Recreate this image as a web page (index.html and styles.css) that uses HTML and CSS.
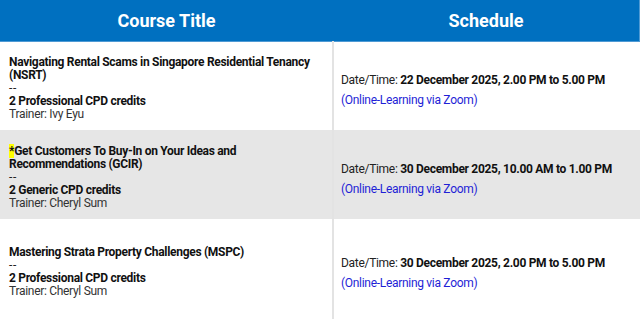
FILE: index.html
```html
<!DOCTYPE html>
<html>
<head>
<meta charset="utf-8">
<link rel="stylesheet" href="styles.css">
</head>
<body>
<table class="courses">
  <thead>
    <tr>
      <th class="col-title">Course Title</th>
      <th class="col-schedule">Schedule</th>
    </tr>
  </thead>
  <tbody>
    <tr class="row row-1">
      <td class="title-cell">
        <div class="course-name">Navigating Rental Scams in Singapore Residential Tenancy (NSRT)</div>
        <div class="sep">--</div>
        <div class="credits">2 Professional CPD credits</div>
        <div class="trainer">Trainer: Ivy Eyu</div>
      </td>
      <td class="schedule-cell">
        <p class="datetime">Date/Time: <b>22 December 2025, 2.00 PM to 5.00 PM</b></p>
        <p class="mode">(Online-Learning via Zoom)</p>
      </td>
    </tr>
    <tr class="row row-2 alt">
      <td class="title-cell">
        <div class="course-name"><span class="mark">*</span>Get Customers To Buy-In on Your Ideas and Recommendations (GCIR)</div>
        <div class="sep">--</div>
        <div class="credits">2 Generic CPD credits</div>
        <div class="trainer">Trainer: Cheryl Sum</div>
      </td>
      <td class="schedule-cell">
        <p class="datetime">Date/Time: <b>30 December 2025, 10.00 AM to 1.00 PM</b></p>
        <p class="mode">(Online-Learning via Zoom)</p>
      </td>
    </tr>
    <tr class="row row-3">
      <td class="title-cell">
        <div class="course-name">Mastering Strata Property Challenges (MSPC)</div>
        <div class="sep">--</div>
        <div class="credits">2 Professional CPD credits</div>
        <div class="trainer">Trainer: Cheryl Sum</div>
      </td>
      <td class="schedule-cell">
        <p class="datetime">Date/Time: <b>30 December 2025, 2.00 PM to 5.00 PM</b></p>
        <p class="mode">(Online-Learning via Zoom)</p>
      </td>
    </tr>
  </tbody>
</table>
</body>
</html>
```
FILE: styles.css
```css
html, body {
  margin: 0;
  padding: 0;
  background: #ffffff;
}
body {
  font-family: Roboto, "Liberation Sans", Arial, sans-serif;
  color: #111111;
}
.courses {
  width: 640px;
  border-collapse: collapse;
  table-layout: fixed;
}
.courses th {
  background: #0070c0;
  color: #ffffff;
  font-size: 18px;
  font-weight: 700;
  height: 41px;
  padding: 0;
  text-align: center;
  vertical-align: middle;
  border-bottom: 1px solid #4f9ad4;
}
.courses th.col-title {
  width: 333px;
}
.courses th.col-schedule {
  border-right: 1px solid #4f9ad4;
}
.courses td {
  vertical-align: middle;
  padding-top: 0;
  padding-bottom: 0;
}
.title-cell {
  padding-left: 9px;
  padding-right: 4px;
  border-right: 2px solid #e3e3e3;
  font-size: 12px;
  letter-spacing: -0.3px;
  line-height: 13px;
}
.title-cell .course-name {
  margin-top: 5px;
}
.schedule-cell {
  padding-left: 7px;
  padding-right: 6px;
  font-size: 12px;
  letter-spacing: -0.3px;
}
.row-1 td { height: 88px; }
.row-2 td { height: 89px; }
.row-3 td { height: 100px; }
.alt td { background: #e6e6e6; }
.course-name,
.credits {
  font-weight: 700;
  color: #111111;
}
.sep {
  color: #222222;
  letter-spacing: 0.6px;
}
.trainer {
  color: #333333;
}
.mark {
  background: #ffff00;
}
.schedule-cell p {
  margin: 0;
  line-height: 20px;
  color: #222222;
}
.schedule-cell .datetime {
  margin-top: 8px;
}
.schedule-cell b {
  color: #111111;
}
.schedule-cell .mode {
  color: #1f1fd6;
}
```
